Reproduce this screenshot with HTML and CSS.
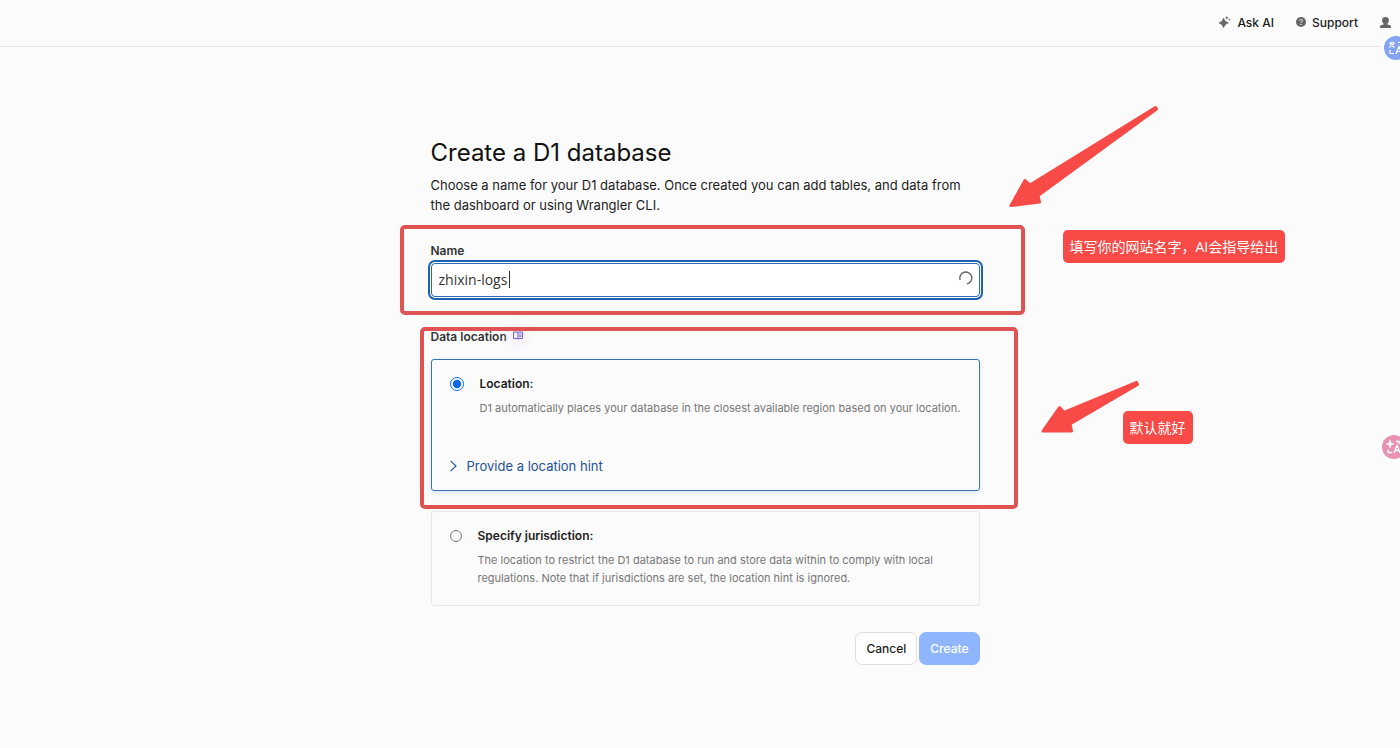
FILE: index.html
```
<!DOCTYPE html>
<html lang="en">
<head>
    <meta charset="UTF-8">
    <meta name="viewport" content="width=device-width, initial-scale=1.0">
    <title>Create a D1 database</title>
    <link rel="stylesheet" href="styles.css">
</head>
<body>
    <header class="topbar">
        <button type="button" class="topbar-btn">
            <svg width="12" height="12" viewBox="0 0 13 13" fill="#666"><path d="M5 2.5 Q5.8 6.6 10 7.5 Q5.8 8.4 5 12.5 Q4.2 8.4 0 7.5 Q4.2 6.6 5 2.5Z" stroke="#666" stroke-width="1"/><path d="M8.5 0 L9.1 1.4 L10.5 2 L9.1 2.6 L8.5 4 L7.9 2.6 L6.5 2 L7.9 1.4Z"/><path d="M11.5 2.5 L11.9 3.6 L13 4 L11.9 4.4 L11.5 5.5 L11.1 4.4 L10 4 L11.1 3.6Z"/></svg>
            Ask AI
        </button>
        <button type="button" class="topbar-btn">
            <svg width="10" height="10" viewBox="0 0 10 10"><circle cx="5" cy="5" r="5" fill="#666"/><path d="M3.6 3.9 C3.6 2.1 6.5 2.1 6.5 3.8 C6.5 4.9 5 4.8 5 6" fill="none" stroke="#fff" stroke-width=".9"/><circle cx="5" cy="7.4" r=".6" fill="#fff"/></svg>
            Support
        </button>
        <button type="button" class="topbar-btn" aria-label="Account">
            <svg width="11" height="11" viewBox="0 0 11 11" fill="#666"><path d="M5.5 0 C8 0 8.9 1.3 8.9 3.3 C8.9 5 8.2 6 7.4 6.7 V7.4 L10.4 8.2 Q11 8.5 11 11 H0 Q0 8.5 .6 8.2 L3.6 7.4 V6.7 C2.8 6 2.1 5 2.1 3.3 C2.1 1.3 3 0 5.5 0Z"/></svg>
        </button>
    </header>

    <main class="page">
        <form class="create-form">
            <h1>Create a D1 database</h1>
            <p class="intro">Choose a name for your D1 database. Once created you can add tables, and data from the dashboard or using Wrangler CLI.</p>

            <label class="field-label" for="db-name">Name</label>
            <div class="name-box">
                <input type="text" id="db-name" value="zhixin-logs" autocomplete="off" spellcheck="false" autofocus>
                <span class="caret"></span>
                <svg class="spinner" width="14" height="14" viewBox="0 0 14 14" fill="none" stroke="#666" stroke-width="1.4"><path d="M1.200 9 A6 6 0 1 1 8 12.900"/></svg>
            </div>

            <div class="field-label location-label">
                <span id="location-title">Data location</span>
                <a href="#" class="docs-link" aria-label="Documentation">
                    <svg width="10" height="9" viewBox="0 0 10 9" fill="none" stroke="#6b4fc4"><path d="M.5 1 H4 L5 1.5 L6 1 H9.5 V7.5 H6 L5 8 L4 7.5 H.5Z M5 1.5 V8" stroke-width=".9"/><path d="M6.2 3 H8.4 M6.2 4.3 H8.4 M6.2 5.6 H8.4" stroke-width=".7"/></svg>
                </a>
            </div>
            <div class="options" role="radiogroup" aria-labelledby="location-title">
                <div class="card selected">
                    <div class="option">
                        <input type="radio" name="placement" id="location" checked>
                        <div>
                            <label for="location">Location:</label>
                            <p>D1 automatically places your database in the closest available region based on your location.</p>
                        </div>
                    </div>
                    <button type="button" class="hint">
                        <svg width="7" height="12" viewBox="0 0 7 12" fill="none" stroke="#1d5296" stroke-width="1.1"><path d="M.6 .8 L6 6 L.6 11.2"/></svg>
                        Provide a location hint
                    </button>
                </div>
                <div class="card">
                    <div class="option">
                        <input type="radio" name="placement" id="jurisdiction">
                        <div>
                            <label for="jurisdiction">Specify jurisdiction:</label>
                            <p>The location to restrict the D1 database to run and store data within to comply with local regulations. Note that if jurisdictions are set, the location hint is ignored.</p>
                        </div>
                    </div>
                </div>
            </div>

            <div class="actions">
                <button type="button" class="btn">Cancel</button>
                <button type="submit" class="btn btn-primary">Create</button>
            </div>

            <!-- notes drawn over the form -->
            <div class="frame frame-name"></div>
            <div class="frame frame-location"></div>
            <svg class="arrow arrow-name" width="160" height="120" viewBox="0 0 160 120"><path d="M154.500 7.500 L29 85 L24 80.500 L10 105.500 L38.500 102 L37 95.500 L155.500 9Z"/></svg>
            <svg class="arrow arrow-location" width="110" height="60" viewBox="0 0 110 60"><path d="M105.500 7.500 L33 37.500 L28.500 32.500 L12 56 L40.500 56 L39 49 L106.500 9.500Z"/></svg>
            <div class="note note-name" lang="zh">填写你的网站名字，AI会指导给出</div>
            <div class="note note-location" lang="zh">默认就好</div>
        </form>
    </main>

    <button type="button" class="bubble bubble-blue" aria-label="Translate">
        <svg width="16" height="16" viewBox="0 0 16 16" fill="none" stroke="#fff" stroke-width="1.2"><path d="M1 3 H7 M4 1.500 V3 M2 3.500 L6.500 7.500 M6 3.500 L1 7.500 M2 10 V13.500 H6 M8 14 L11 6.500 L14 14 M9 11.500 H13 M10 2.500 H13 V5"/></svg>
    </button>
    <button type="button" class="bubble bubble-pink" aria-label="AI translate">
        <svg width="16" height="16" viewBox="0 0 16 16" fill="none" stroke="#fff" stroke-width="1.3"><path d="M4 1 L5 4 L8 5 L5 6 L4 9 L3 6 L0 5 L3 4Z" fill="#fff" stroke="#fff" stroke-width=".5"/><path d="M2 10.500 V13.500 H6 M8 14 L11 6.500 L14 14 M9 11.500 H13 M10 2.500 H13 V5"/></svg>
    </button>
</body>
</html>
```

FILE: styles.css
```
* {
    box-sizing: border-box;
}
body {
    margin: 0;
    min-height: 100vh;
    overflow-x: hidden;
    background: #fbfbfb;
    color: #1d1d1d;
    font-family: Inter, "Liberation Sans", sans-serif;
    font-size: 13px;
}
button {
    font-family: inherit;
    cursor: pointer;
}
h1, p {
    margin: 0;
}

.topbar {
    display: flex;
    justify-content: flex-end;
    align-items: center;
    gap: 22px;
    height: 47px;
    padding: 0 9px 2px;
    border-bottom: 1px solid #e2e2e2;
}
.topbar-btn {
    display: flex;
    align-items: center;
    gap: 6px;
    padding: 0;
    border: none;
    background: none;
    color: #1d1d1d;
    font-size: 12px;
    font-weight: 500;
}

.page {
    padding: 88px 0 80px 10px;
}
.create-form {
    position: relative;
    width: 100%;
    max-width: 549px;
    margin: 0 auto;
}
h1 {
    font-size: 24px;
    font-weight: 400;
    line-height: 36px;
    color: #111;
}
.intro {
    margin-top: 4px;
    line-height: 20px;
}
.field-label {
    display: block;
    margin-top: 28px;
    font-size: 12px;
    font-weight: 600;
    line-height: 16px;
    color: #333;
}
.name-box {
    position: relative;
    margin-top: 4px;
}
.name-box input {
    display: block;
    width: 100%;
    height: 34px;
    padding: 0 32px 2px 7px;
    border: 1px solid #2b6cb8;
    border-radius: 4px;
    outline: 2px solid #1d62b8;
    outline-offset: 1px;
    background: #fff;
    color: #333;
    caret-color: transparent;
    font-family: "Open Sans", sans-serif;
    font-size: 14px;
}
.caret {
    position: absolute;
    left: 78px;
    top: 8px;
    width: 1px;
    height: 17px;
    background: #333;
}
.spinner {
    position: absolute;
    right: 7px;
    top: 8px;
}

.location-label {
    display: flex;
    align-items: flex-start;
    gap: 6px;
    margin-top: 32px;
}
.docs-link {
    display: flex;
    height: 12px;
    align-items: center;
    border-radius: 50%;
    box-shadow: 0 0 8px 5px #f3effc;
    background: #f3effc;
}
.options {
    display: grid;
    gap: 20px;
    margin-top: 14px;
}
.card {
    padding: 14px 18px 18px;
    border: 1px solid #e6e6e6;
    border-radius: 3px;
}
.card.selected {
    padding-bottom: 13px;
    border-color: #3672b5;
    box-shadow: 0 2px 5px #dde6f2;
}
.option {
    display: flex;
    gap: 16px;
}
.option input {
    flex: none;
    width: 12px;
    height: 12px;
    margin: 4px 0;
}
.selected .option input {
    width: 14px;
    height: 14px;
    margin: 3px 0;
    accent-color: #0b68e8;
}
.option label {
    display: block;
    font-size: 12px;
    font-weight: 600;
    line-height: 20px;
}
.option p {
    margin-top: 5px;
    font-size: 11px;
    line-height: 18px;
    color: #777;
}
.hint {
    display: flex;
    align-items: center;
    gap: 10px;
    margin-top: 38px;
    padding: 0;
    border: none;
    background: none;
    color: #1d5296;
    font-size: 13px;
    line-height: 22px;
}
.actions {
    display: flex;
    justify-content: flex-end;
    gap: 2px;
    margin-top: 26px;
}
.btn {
    height: 33px;
    padding: 0 10px;
    border: 1px solid #dedede;
    border-radius: 7px;
    background: #fff;
    color: #222;
    font-size: 12px;
    font-weight: 500;
}
.btn-primary {
    border-color: #8fb6fc;
    background: #8fb6fc;
    color: #fff;
}

.frame {
    position: absolute;
    border: 4px solid #e05353;
    border-radius: 5px;
    pointer-events: none;
}
.frame-name {
    left: -31px;
    right: -45px;
    top: 90px;
    height: 90px;
}
.frame-location {
    left: -11px;
    right: -38px;
    top: 192px;
    height: 182px;
}
.arrow {
    position: absolute;
    fill: #f84a47;
    stroke: #f84a47;
    stroke-width: 3px;
    stroke-linejoin: round;
    pointer-events: none;
}
.arrow-name {
    left: 570px;
    top: -35px;
}
.arrow-location {
    left: 600px;
    top: 240px;
}
.note {
    position: absolute;
    padding: 0 7px;
    border-radius: 5px;
    background: #f84a47;
    color: #fff;
    font-family: "Open Sans", "Noto Sans CJK SC", sans-serif;
    font-size: 14px;
    line-height: 33px;
    white-space: nowrap;
}
.note-name {
    left: 632px;
    top: 95px;
}
.note-location {
    left: 692px;
    top: 276px;
}

.bubble {
    position: fixed;
    display: flex;
    align-items: center;
    width: 24px;
    height: 24px;
    padding: 0 0 0 4px;
    border: none;
    border-radius: 50%;
    box-shadow: 0 0 0 4px #fdfdfd;
}
.bubble-blue {
    top: 36px;
    right: -8px;
    background: #86a4f4;
}
.bubble-pink {
    top: 435px;
    right: -6px;
    background: #e893b2;
}
```
